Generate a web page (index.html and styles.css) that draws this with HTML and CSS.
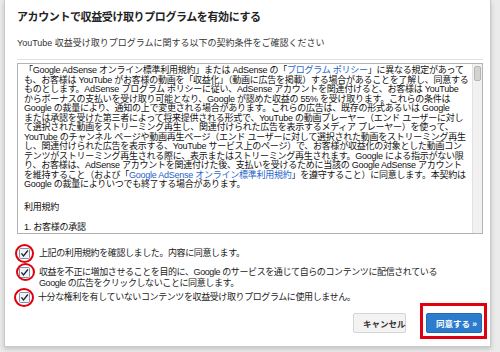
FILE: index.html
```html
<!DOCTYPE html>
<html lang="ja">
<head>
<meta charset="utf-8">
<title>アカウントで収益受け取りプログラムを有効にする</title>
<link rel="stylesheet" href="styles.css">
</head>
<body>
<div class="dialog">
  <h1 class="title">アカウントで収益受け取りプログラムを有効にする</h1>
  <p class="subtitle">YouTube 収益受け取りプログラムに関する以下の契約条件をご確認ください</p>
  <div class="sep"></div>
  <div class="terms">
    <div class="terms-text">
      <p class="para">「Google AdSense オンライン標準利用規約」または AdSense の「<span class="link">プログラム ポリシー</span>」に異なる規定があって<br>も、お客様は YouTube がお客様の動画を「収益化」（動画に広告を掲載）する場合があることを了解し、同意する<br>ものとします。AdSense プログラム ポリシーに従い、AdSense アカウントを関連付けると、お客様は YouTube<br>からボーナスの支払いを受け取り可能となり、Google が認めた収益の 55% を受け取ります。これらの条件は<br>Google の裁量により、通知の上で変更される場合があります。これらの広告は、既存の形式あるいは Google<br>または承認を受けた第三者によって将来提供される形式で、YouTube の動画プレーヤー（エンド ユーザーに対し<br>て選択された動画をストリーミング再生し、関連付けられた広告を表示するメディア プレーヤー）を使って、<br>YouTube のチャンネル ページや動画再生ページ（エンド ユーザーに対して選択された動画をストリーミング再生<br>し、関連付けられた広告を表示する、YouTube サービス上のページ）で、お客様が収益化の対象とした動画コン<br>テンツがストリーミング再生される際に、表示またはストリーミング再生されます。Google による指示がない限<br>り、お客様は、AdSense アカウントを関連付けた後、支払いを受けるために当該の Google AdSense アカウント<br>を維持すること（および「<span class="link">Google AdSense オンライン標準利用規約</span>」を遵守すること）に同意します。本契約は<br>Google の裁量によりいつでも終了する場合があります。</p>
      <p class="para heading">利用規約</p>
      <p class="para">1. お客様の承認</p>
    </div>
    <div class="scrollbar"><div class="thumb"></div></div>
  </div>
  <div class="checks">
    <div class="check check-1">
      <span class="cbwrap">
        <svg class="cb" viewBox="0 0 11 11" width="11" height="11"><rect x="0.5" y="0.5" width="10" height="10" rx="1" fill="#eef3fa" stroke="#7d91ab"/><path d="M2.4 5.4 L4.5 7.9 L8.9 2.5" fill="none" stroke="#222" stroke-width="1.3"/></svg>
        <span class="mark"></span>
      </span>
      <span class="label">上記の利用規約を確認しました。内容に同意します。</span>
    </div>
    <div class="check check-2">
      <span class="cbwrap">
        <svg class="cb" viewBox="0 0 11 11" width="11" height="11"><rect x="0.5" y="0.5" width="10" height="10" rx="1" fill="#eef3fa" stroke="#7d91ab"/><path d="M2.4 5.4 L4.5 7.9 L8.9 2.5" fill="none" stroke="#222" stroke-width="1.3"/></svg>
        <span class="mark"></span>
      </span>
      <span class="label">収益を不正に増加させることを目的に、Google のサービスを通じて自らのコンテンツに配信されている<br>Google の広告をクリックしないことに同意します。</span>
    </div>
    <div class="check check-3">
      <span class="cbwrap">
        <svg class="cb" viewBox="0 0 11 11" width="11" height="11"><rect x="0.5" y="0.5" width="10" height="10" rx="1" fill="#eef3fa" stroke="#7d91ab"/><path d="M2.4 5.4 L4.5 7.9 L8.9 2.5" fill="none" stroke="#222" stroke-width="1.3"/></svg>
        <span class="mark"></span>
      </span>
      <span class="label">十分な権利を有していないコンテンツを収益受け取りプログラムに使用しません。</span>
    </div>
  </div>
  <div class="footer">
    <button class="btn btn-cancel" type="button">キャンセル</button>
    <span class="highlight">
      <button class="btn btn-agree" type="button">同意する »</button>
      <span class="box"></span>
    </span>
  </div>
</div>
</body>
</html>
```
FILE: styles.css
```css
* { box-sizing: border-box; }
html, body { margin: 0; padding: 0; }
body {
  width: 500px;
  height: 352px;
  overflow: hidden;
  background: #ebebeb;
  font-family: "Liberation Sans", "Noto Sans CJK JP", sans-serif;
  color: #222;
}
.dialog {
  margin-left: 4px;
  width: 487px;
  height: 347px;
  background: #fff;
  border: 1px solid #c9c9c9;
  border-top: none;
  box-shadow: 0 2px 5px rgba(0,0,0,0.18);
  padding: 10px 7px 0 12px;
  display: flex;
  flex-direction: column;
}
.title {
  margin: 0;
  font-size: 11px;
  line-height: 14px;
  font-weight: 700;
  letter-spacing: -0.4px;
  color: #222;
  white-space: nowrap;
}
.subtitle {
  margin: 13px 0 0;
  font-size: 9px;
  line-height: 12px;
  color: #333;
  white-space: nowrap;
}
.sep {
  margin-top: 10px;
  height: 1px;
  background: #e3e3e3;
}
.terms {
  margin-top: 3px;
  width: 466px;
  height: 171px;
  border: 1px solid #b3b3b3;
  display: flex;
  overflow: hidden;
}
.terms-text {
  flex: 1;
  padding: 2px 0 0 6px;
  font-size: 9px;
  line-height: 9.5px;
  letter-spacing: -0.25px;
  color: #111;
  white-space: nowrap;
  overflow: hidden;
}
.para { margin: 0; }
.para.heading { margin: 13.5px 0 10.5px; }
.link { color: #1f63c6; }
.scrollbar {
  width: 10px;
  flex-shrink: 0;
  background: #f1f1f1;
  border-left: 1px solid #e2e2e2;
  padding: 2px 1px 0 1px;
}
.thumb {
  height: 15px;
  background: #d3d3d3;
  border: 1px solid #b5b5b5;
  border-radius: 2px;
}
.checks {
  margin-top: 13.5px;
  display: flex;
  flex-direction: column;
}
.check {
  display: flex;
  align-items: flex-start;
  gap: 9px;
  padding-left: 2px;
  font-size: 9px;
  line-height: 11px;
  letter-spacing: -0.4px;
  color: #222;
  white-space: nowrap;
}
.check-2 { margin-top: 8px; }
.check-3 { margin-top: 3px; gap: 8px; }
.cbwrap {
  position: relative;
  width: 11px;
  height: 11px;
  flex-shrink: 0;
  display: block;
}
.cb { display: block; }
.mark {
  position: absolute;
  left: -4px;
  top: -4px;
  width: 19px;
  height: 19px;
  border: 2.5px solid #e1000f;
  border-radius: 50%;
}
.check-2 .mark { left: -3px; top: -4px; width: 19px; height: 18px; }
.check-3 .mark { left: -5px; top: -4px; width: 20px; height: 19px; }
.footer {
  margin-top: 10.5px;
  display: flex;
  justify-content: flex-end;
  align-items: flex-start;
  gap: 20px;
  padding-right: 1px;
}
.btn {
  height: 20px;
  margin: 0;
  padding: 0 9px;
  font-family: "Liberation Sans", "Noto Sans CJK JP", sans-serif;
  font-size: 8.5px;
  font-weight: 700;
  border-radius: 2px;
  cursor: pointer;
  white-space: nowrap;
}
.btn-cancel {
  width: 53px;
  background: #f3f3f3;
  border: 1px solid #d4d4d4;
  color: #333;
}
.highlight {
  position: relative;
  display: block;
}
.btn-agree {
  display: block;
  width: 56px;
  background: #2b7ccc;
  border: 1px solid #2269b2;
  color: #fff;
}
.box {
  position: absolute;
  left: -6px;
  right: -5px;
  top: -10px;
  bottom: -6px;
  border: 3px solid #e1000f;
}
```
